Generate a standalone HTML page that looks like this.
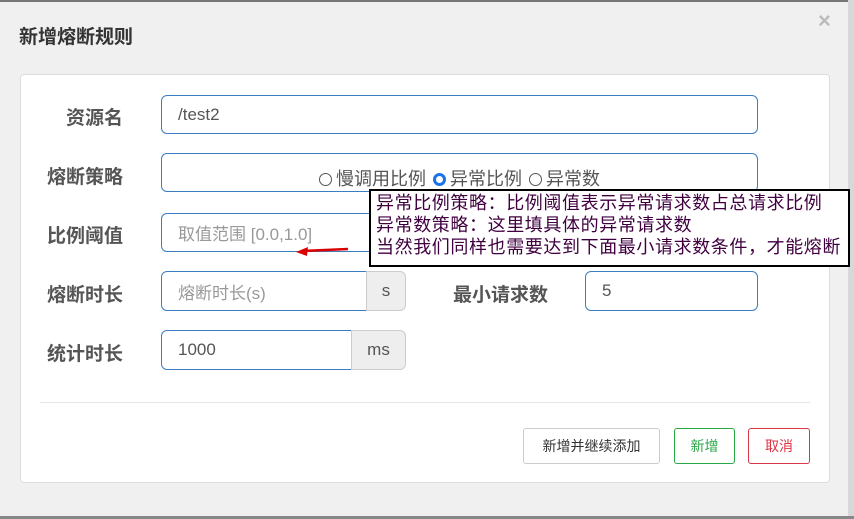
<!DOCTYPE html>
<html><head><meta charset="utf-8"><style>
body{margin:0;width:854px;height:519px;background:#f0f0f0;font-family:"Liberation Sans","Noto Sans CJK SC",sans-serif;position:relative;overflow:hidden}
.a{position:absolute}
.top{left:0;top:0;width:854px;height:2px;background:#777}
.rs{left:848px;top:0;width:6px;height:519px;background:#d8d8d8}
.bot{left:0;top:516px;width:854px;height:3px;background:#888}
.title{left:19px;top:22px;font-size:19px;font-weight:bold;color:#333}
.x{left:818px;top:8px;font-size:22px;font-weight:bold;color:#bbb}
.panel{left:20px;top:74px;width:810px;height:409px;background:#fff;border:1px solid #ddd;border-radius:4px;box-sizing:border-box}
.lbl{font-size:19px;font-weight:bold;color:#555;width:112px;text-align:right;left:11px}
.in{border:1px solid #3a7dc0;border-radius:6px;background:#fff;box-sizing:border-box;font-size:17px;color:#555;padding-left:16px;display:flex;align-items:center}
.ph{color:#999}
.ad{background:#eee;border:1px solid #ccc;box-sizing:border-box;font-size:17px;color:#555;display:flex;align-items:center;justify-content:center;border-radius:0 6px 6px 0}
.btn{border:1px solid #ccc;border-radius:3px;box-sizing:border-box;font-size:14px;display:flex;align-items:center;justify-content:center;background:#fff;color:#333}
.note{left:369px;top:189px;width:481px;height:78px;border:2px solid #000;background:#fff;box-sizing:border-box;font-family:"Noto Sans CJK SC",sans-serif;font-size:18px;letter-spacing:0.6px;color:#400040;line-height:22px;padding:0 0 0 5px;white-space:nowrap;overflow:hidden}
.rad{display:inline-block;width:13px;height:13px;border:1px solid #555;border-radius:50%;vertical-align:-1px;margin-right:4px;box-sizing:border-box}
</style></head><body>
<div class="a top"></div><div class="a rs"></div><div class="a bot"></div>
<div class="a title">新增熔断规则</div>
<div class="a x">×</div>
<div class="a panel"></div>
<div class="a lbl" style="top:103px">资源名</div>
<div class="a in" style="left:161px;top:95px;width:597px;height:39px">/test2</div>
<div class="a lbl" style="top:162px">熔断策略</div>
<div class="a in" style="left:161px;top:153px;width:597px;height:39px;justify-content:center;padding:10px 0 0 0;font-size:18px">
<span><span class="rad"></span>慢调用比例 <span class="rad" style="border:3.5px solid #1a73e8;margin-left:2px"></span>异常比例 <span class="rad" style="margin-left:2px"></span>异常数</span></div>
<div class="a lbl" style="top:221px">比例阈值</div>
<div class="a in ph" style="left:161px;top:213px;width:597px;height:39px">取值范围 [0.0,1.0]</div>
<div class="a lbl" style="top:280px">熔断时长</div>
<div class="a in ph" style="left:161px;top:271px;width:206px;height:40px;border-radius:6px 0 0 6px">熔断时长(s)</div>
<div class="a ad" style="left:366px;top:271px;width:40px;height:40px">s</div>
<div class="a" style="left:453px;top:280px;font-size:19px;font-weight:bold;color:#555">最小请求数</div>
<div class="a in" style="left:585px;top:271px;width:173px;height:40px">5</div>
<div class="a lbl" style="top:339px">统计时长</div>
<div class="a in" style="left:161px;top:330px;width:191px;height:40px;border-radius:6px 0 0 6px">1000</div>
<div class="a ad" style="left:351px;top:330px;width:55px;height:40px">ms</div>
<div class="a" style="left:40px;top:402px;width:770px;height:1px;background:#e5e5e5"></div>
<div class="a btn" style="left:523px;top:428px;width:137px;height:36px">新增并继续添加</div>
<div class="a btn" style="left:674px;top:428px;width:61px;height:36px;color:#28a745;border-color:#28a745">新增</div>
<div class="a btn" style="left:748px;top:428px;width:62px;height:36px;color:#dc3545;border-color:#dc3545">取消</div>
<div class="a note">异常比例策略：比例阈值表示异常请求数占总请求比例<br>异常数策略：这里填具体的异常请求数<br>当然我们同样也需要达到下面最小请求数条件，才能熔断</div>
<svg class="a" style="left:292px;top:244px" width="62" height="16"><path d="M10 7 L56 5" stroke="#d00" stroke-width="2.5"/><path d="M4 8 L16 3 L15 12 Z" fill="#d00"/></svg>
</body></html>
